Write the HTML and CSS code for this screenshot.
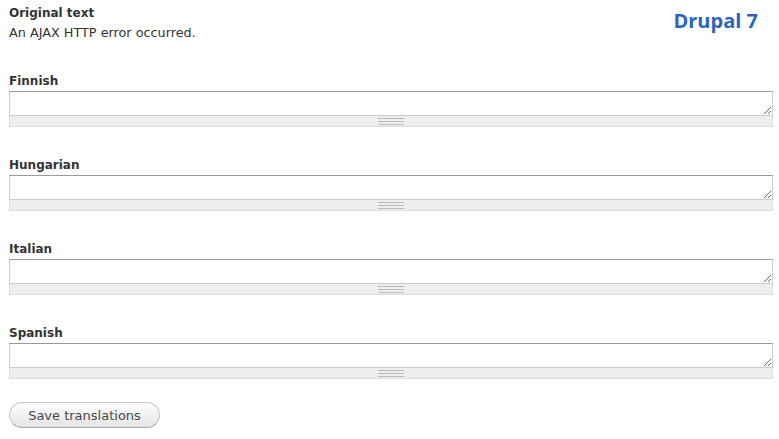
FILE: index.html
```html
<!DOCTYPE html>
<html>
<head>
<meta charset="utf-8">
<link rel="stylesheet" href="styles.css">
</head>
<body>
<div class="page">
  <div class="header">
    <div class="original">
      <div class="label">Original text</div>
      <div class="source">An AJAX HTTP error occurred.</div>
    </div>
    <div class="brand">Drupal 7</div>
  </div>
  <form class="form">
    <div class="item">
      <label class="label">Finnish</label>
      <div class="resizable"><textarea class="ta"></textarea><div class="grippie"></div></div>
    </div>
    <div class="item">
      <label class="label">Hungarian</label>
      <div class="resizable"><textarea class="ta"></textarea><div class="grippie"></div></div>
    </div>
    <div class="item">
      <label class="label">Italian</label>
      <div class="resizable"><textarea class="ta"></textarea><div class="grippie"></div></div>
    </div>
    <div class="item">
      <label class="label">Spanish</label>
      <div class="resizable"><textarea class="ta"></textarea><div class="grippie"></div></div>
    </div>
    <div class="actions">
      <button type="button" class="btn">Save translations</button>
    </div>
  </form>
</div>
</body>
</html>
```
FILE: styles.css
```css
html, body {
  margin: 0;
  padding: 0;
  background: #fff;
}
body {
  font-family: "DejaVu Sans", "Lucida Grande", Verdana, sans-serif;
  font-size: 12px;
  color: #333;
}
.page {
  padding: 5px 6px 0 9px;
}
.header {
  display: flex;
  justify-content: space-between;
  align-items: flex-start;
}
.label {
  display: block;
  font-weight: bold;
  line-height: 16px;
  color: #333;
}
.source {
  margin-top: 2px;
  font-size: 12.8px;
  line-height: 20px;
  color: #333;
}
.brand {
  font-family: "Open Sans", sans-serif;
  font-weight: bold;
  font-size: 20px;
  color: #2a64c0;
  line-height: 26px;
  margin-top: 3px;
  margin-right: 15px;
}
.form {
  margin-top: 30px;
}
.item {
  margin-bottom: 30px;
}
.item .label {
  margin-bottom: 2px;
}
.resizable {
  width: 764px;
}
.ta {
  display: block;
  box-sizing: border-box;
  width: 100%;
  height: 25px;
  margin: 0;
  border: 1px solid #ccc;
  border-top-color: #999;
  padding: 2px;
  font: inherit;
  resize: vertical;
  background: #fff;
}
.grippie {
  box-sizing: border-box;
  height: 11px;
  background: #eee;
  border: 1px solid #ddd;
  border-top: 0;
  display: flex;
  align-items: center;
  justify-content: center;
}
.grippie::before {
  content: "";
  width: 26px;
  height: 5px;
  border-top: 1px solid #bbb;
  border-bottom: 1px solid #bbb;
  background: linear-gradient(#bbb, #bbb) center / 100% 1px no-repeat;
}
.actions {
  margin-top: -7px;
}
.btn {
  box-sizing: border-box;
  width: 151px;
  height: 26px;
  padding: 0 12px;
  border: 1px solid #c5c5c5;
  border-bottom-color: #aaa;
  border-radius: 13px;
  background: linear-gradient(#fefefe, #e4e4e4);
  font-family: "DejaVu Sans", "Lucida Grande", Verdana, sans-serif;
  font-size: 13px;
  color: #4a4a4a;
  cursor: pointer;
}
```
